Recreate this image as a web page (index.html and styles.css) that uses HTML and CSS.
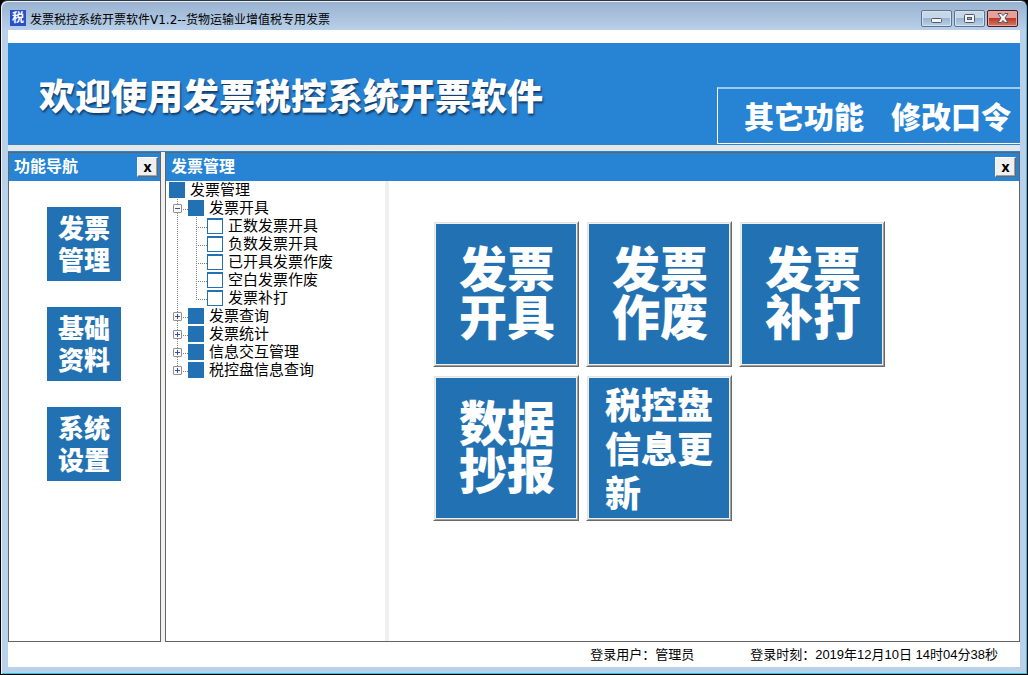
FILE: index.html
```html
<!DOCTYPE html>
<html lang="zh-CN">
<head>
<meta charset="utf-8">
<title>发票税控系统开票软件V1.2--货物运输业增值税专用发票</title>
<link rel="stylesheet" href="styles.css">
</head>
<body>
<div class="window">
  <header class="titlebar">
    <span class="app-icon">税</span>
    <span class="app-title">发票税控系统开票软件V1.2--货物运输业增值税专用发票</span>
    <div class="window-controls">
      <button class="control control-min" type="button" aria-label="最小化"><svg width="11" height="5" viewBox="0 0 11 5"><rect x=".5" y=".5" width="10" height="4" rx="1" fill="#f4f4f4" stroke="#535666"/></svg></button>
      <button class="control" type="button" aria-label="最大化"><svg width="11" height="9" viewBox="0 0 11 9"><rect x=".5" y=".5" width="10" height="8" rx="1" fill="#f4f4f4" stroke="#535666"/><rect x="3.5" y="3.5" width="4" height="2" fill="#8fb0d0" stroke="#535666"/></svg></button>
      <button class="control control-close" type="button" aria-label="关闭"><svg width="12" height="10" viewBox="0 0 12 10"><path d="M1 .5h3.2L6 2.6 7.8.5H11L8 5l3 4.5H7.8L6 7.4 4.2 9.5H1L4 5z" fill="#f6f6f6" stroke="#535666" stroke-width="1"/></svg></button>
    </div>
  </header>
  <div class="client">
    <div class="banner">
      <h1 class="banner-title">欢迎使用发票税控系统开票软件</h1>
      <nav class="banner-menu">
        <button class="banner-link" type="button">其它功能</button>
        <button class="banner-link" type="button">修改口令</button>
      </nav>
    </div>
    <div class="strip"></div>
    <main class="panels">
      <section class="panel panel-nav">
        <div class="panel-head"><h2>功能导航</h2><button class="panel-close" type="button">x</button></div>
        <nav class="nav-list">
          <button class="nav-button" type="button">发票<br>管理</button>
          <button class="nav-button" type="button">基础<br>资料</button>
          <button class="nav-button" type="button">系统<br>设置</button>
        </nav>
      </section>
      <section class="panel panel-main">
        <div class="panel-head"><h2>发票管理</h2><button class="panel-close" type="button">x</button></div>
        <div class="panel-body">
          <div class="tree">
            <div class="row row-root"><i class="node"></i><span>发票管理</span></div>
            <div class="row"><span class="guide trunk"><button class="expander" type="button" aria-label="折叠"></button></span><i class="node"></i><span>发票开具</span></div>
            <div class="row"><span class="guide line"></span><span class="guide branch"></span><i class="node leaf"></i><span>正数发票开具</span></div>
            <div class="row"><span class="guide line"></span><span class="guide branch"></span><i class="node leaf"></i><span>负数发票开具</span></div>
            <div class="row"><span class="guide line"></span><span class="guide branch"></span><i class="node leaf"></i><span>已开具发票作废</span></div>
            <div class="row"><span class="guide line"></span><span class="guide branch"></span><i class="node leaf"></i><span>空白发票作废</span></div>
            <div class="row"><span class="guide line"></span><span class="guide branch last"></span><i class="node leaf"></i><span>发票补打</span></div>
            <div class="row"><span class="guide trunk"><button class="expander plus" type="button" aria-label="展开"></button></span><i class="node"></i><span>发票查询</span></div>
            <div class="row"><span class="guide trunk"><button class="expander plus" type="button" aria-label="展开"></button></span><i class="node"></i><span>发票统计</span></div>
            <div class="row"><span class="guide trunk"><button class="expander plus" type="button" aria-label="展开"></button></span><i class="node"></i><span>信息交互管理</span></div>
            <div class="row"><span class="guide trunk last"><button class="expander plus" type="button" aria-label="展开"></button></span><i class="node"></i><span>税控盘信息查询</span></div>
          </div>
          <div class="splitter"></div>
          <div class="tiles">
            <button class="tile" type="button">发票<br>开具</button>
            <button class="tile" type="button">发票<br>作废</button>
            <button class="tile" type="button">发票<br>补打</button>
            <button class="tile" type="button">数据<br>抄报</button>
            <button class="tile tile-small" type="button">税控盘<br>信息更<br>新</button>
          </div>
        </div>
      </section>
    </main>
    <footer class="status">
      <span>登录用户：管理员</span>
      <span>登录时刻：2019年12月10日 14时04分38秒</span>
    </footer>
  </div>
</div>
</body>
</html>
```

FILE: styles.css
```css
* {
  box-sizing: border-box;
}

body {
  margin: 0;
  background: #000;
  color: #000;
  font-family: "Liberation Sans", "Noto Sans CJK SC", sans-serif;
}

button {
  margin: 0;
  padding: 0;
  border: 0;
  color: inherit;
  font-family: inherit;
}

h1,
h2 {
  margin: 0;
}

.window {
  display: flex;
  flex-direction: column;
  height: 100vh;
  padding: 0 6px 7px;
  border: 1px solid #000;
  border-top-color: #30343c;
  border-radius: 7px 7px 0 0;
  background: linear-gradient(#98b1cf, #b9d1ea 30px);
  box-shadow: inset 1px 1px #e8f2fb, inset -1px -1px #35c2e0;
}

.titlebar {
  display: flex;
  flex: none;
  align-items: center;
  height: 29px;
  padding: 5px 3px 0;
  font-family: "DejaVu Sans", "Noto Sans CJK SC", sans-serif;
  font-size: 12px;
}

.app-icon {
  width: 16px;
  height: 16px;
  margin-right: 4px;
  background: #2a50c8;
  color: #fff;
  font-weight: 700;
  line-height: 16px;
  text-align: center;
}

.window-controls {
  display: flex;
  gap: 2px;
  margin-left: auto;
}

.control {
  display: flex;
  align-items: center;
  justify-content: center;
  width: 31px;
  height: 17px;
  border: 1px solid #60718c;
  border-radius: 2px;
  background: linear-gradient(#c6d7e9 45%, #9bb4d0 50%, #b9d0e8);
  box-shadow: inset 0 0 0 1px #d5e3f1;
}

.control-min {
  padding-top: 4px;
}

.control-close {
  border-color: #4a1722;
  background: linear-gradient(#e5a197 45%, #b93a28 50%, #d47b62);
  box-shadow: inset 0 0 0 1px #e9a99c;
}

.client {
  display: flex;
  flex: 1;
  flex-direction: column;
  min-height: 0;
  margin: 0 1px;
  padding-top: 13px;
  background: #fff;
}

.banner {
  display: flex;
  flex: none;
  align-items: flex-end;
  justify-content: space-between;
  height: 102px;
  padding: 0 0 1px 31px;
  background: #2783d3;
  color: #fff;
}

.banner-title {
  align-self: center;
  padding-top: 8px;
  font-size: 36px;
  font-weight: 900;
  line-height: 44px;
  white-space: nowrap;
  text-shadow: 1px 2px 2px #123a68;
}

.banner-menu {
  display: flex;
  gap: 27px;
  height: 57px;
  padding: 0 9px 3px 26px;
  border: solid #fff;
  border-width: 2px 0 1px 1px;
  border-top-color: #9cccf5;
}

.banner-link {
  background: none;
  font-size: 30px;
  font-weight: 900;
  white-space: nowrap;
}

.strip {
  flex: none;
  height: 7px;
  border-bottom: 1px solid #2783d3;
  background: radial-gradient(ellipse at 38% 100%, #fff, #f5f7f7 6%, #e5e6e6 10%);
}

.panels {
  display: flex;
  flex: 1;
  gap: 4px;
  min-height: 0;
  background: #f0f0f0;
}

.panel {
  display: flex;
  flex-direction: column;
  border: 1px solid #646464;
  background: #fff;
}

.panel-nav {
  flex: none;
  width: 153px;
}

.panel-main {
  flex: 1;
}

.panel-head {
  display: flex;
  flex: none;
  align-items: center;
  justify-content: space-between;
  height: 28px;
  padding: 0 3px 0 5px;
  background: #2783d3;
  color: #fff;
}

.panel-nav .panel-head {
  padding-right: 2px;
}

.panel-head h2 {
  font-size: 16px;
  line-height: 24px;
}

.panel-close {
  width: 21px;
  height: 20px;
  border: 1px solid;
  border-color: #fff #696969 #696969 #fff;
  background: #f0f0f0;
  box-shadow: inset -1px -1px #a0a0a0;
  color: #000;
  font-family: "Noto Sans", sans-serif;
  font-size: 14px;
  font-weight: 700;
  line-height: 16px;
}

.nav-list {
  display: flex;
  flex-direction: column;
  gap: 26px;
  align-items: flex-start;
  padding: 26px 0 0 38px;
}

.nav-button {
  width: 74px;
  height: 74px;
  padding-top: 2px;
  background: #2272b3;
  color: #fff;
  font-size: 26px;
  font-weight: 900;
  line-height: 32px;
}

.panel-body {
  display: flex;
  flex: 1;
}

.tree {
  flex: none;
  width: 219px;
  font-size: 15px;
}

.row {
  display: flex;
  align-items: center;
  height: 18px;
  line-height: 18px;
  white-space: nowrap;
}

.row-root {
  padding-left: 3px;
}

.node {
  flex: none;
  width: 16px;
  height: 16px;
  margin-right: 5px;
  background: #2272b3;
}

.leaf {
  border: 1px solid #2272b3;
  border-top-width: 2px;
  background: #fff;
}

.guide {
  --dots-y: repeating-linear-gradient(#808080 0 1px, transparent 1px 2px);
  --dots-x: repeating-linear-gradient(90deg, #808080 0 1px, transparent 1px 2px);
  display: flex;
  flex: none;
  align-items: center;
  width: 22px;
  height: 18px;
  padding: 1px 0 0 7px;
  background-repeat: no-repeat;
}

.line {
  background-image: var(--dots-y);
  background-position: 11px 0;
  background-size: 1px 18px;
}

.trunk {
  background-image: var(--dots-y), var(--dots-x);
  background-position: 11px 0, 11px 10px;
  background-size: 1px 18px, 11px 1px;
}

.branch {
  width: 19px;
  background-image: var(--dots-y), var(--dots-x);
  background-position: 8px 0, 8px 10px;
  background-size: 1px 18px, 11px 1px;
}

.last {
  background-size: 1px 10px, 11px 1px;
}

.expander {
  width: 9px;
  height: 9px;
  border: 1px solid #919191;
  border-radius: 1px;
  background: linear-gradient(#3c50a0, #3c50a0) center / 5px 1px no-repeat, #f8f8f8;
}

.plus {
  background: linear-gradient(#3c50a0, #3c50a0) center / 5px 1px no-repeat, linear-gradient(#3c50a0, #3c50a0) center / 1px 5px no-repeat, #f8f8f8;
}

.splitter {
  flex: none;
  width: 4px;
  background: #f0f0f0;
}

.tiles {
  display: grid;
  flex: 1;
  grid-template-columns: repeat(3, 146px);
  gap: 8px 7px;
  align-content: start;
  padding: 40px 0 0 44px;
}

.tile {
  height: 146px;
  padding: 2px 0 0 2px;
  border: 1px solid;
  border-color: #fff #696969 #696969 #fff;
  background: #2272b3;
  box-shadow: inset 1px 1px #e3e3e3, inset -1px -1px #a0a0a0, inset 0 0 0 2px #f0f0f0;
  color: #fff;
  font-size: 48px;
  font-weight: 900;
  line-height: 48px;
}

.tile-small {
  padding: 6px 0 0 18px;
  font-size: 36px;
  line-height: 44px;
  text-align: left;
}

.status {
  display: flex;
  flex: none;
  gap: 56px;
  align-items: center;
  justify-content: flex-end;
  height: 25px;
  padding: 0 22px 2px 0;
  font-size: 13px;
}
```
